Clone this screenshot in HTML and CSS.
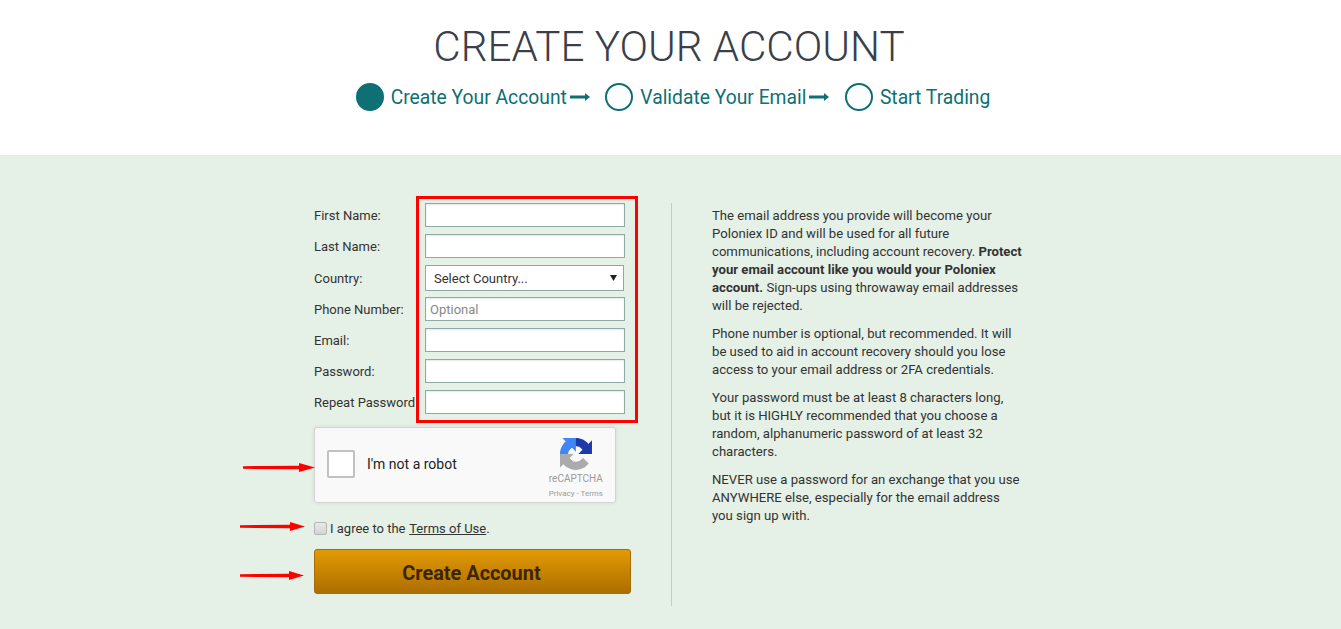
FILE: index.html
```html
<!DOCTYPE html>
<html>
<head>
	<title>Create Your Account</title>
	<link rel="stylesheet" href="styles.css">
</head>
<body>
	<header class="top">
		<h1>CREATE YOUR ACCOUNT</h1>
		<div class="steps">
			<span class="dot dot-on"></span>
			<span class="step-name">Create Your Account</span>
			<svg class="step-arrow" width="20" height="10" viewBox="0 0 20 10"><path d="M0 3.5h15V1l5 4-5 4V6.5H0z" fill="#0e6f74"/></svg>
			<span class="dot"></span>
			<span class="step-name">Validate Your Email</span>
			<svg class="step-arrow" width="20" height="10" viewBox="0 0 20 10"><path d="M0 3.5h15V1l5 4-5 4V6.5H0z" fill="#0e6f74"/></svg>
			<span class="dot"></span>
			<span class="step-name">Start Trading</span>
		</div>
	</header>

	<main class="panel">
		<form class="signup">
			<div class="rows">
				<label class="row"><span class="row-label">First Name:</span><input class="field" type="text"></label>
				<label class="row"><span class="row-label">Last Name:</span><input class="field" type="text"></label>
				<label class="row row-select"><span class="row-label">Country:</span>
					<span class="select-box">
						<select class="field-select"><option>Select Country...</option></select>
						<svg class="select-arrow" width="7" height="6" viewBox="0 0 7 6"><path d="M0 0h7L3.5 6z" fill="#222"/></svg>
					</span>
				</label>
				<label class="row"><span class="row-label">Phone Number:</span><input class="field" type="text" placeholder="Optional"></label>
				<label class="row"><span class="row-label">Email:</span><input class="field" type="text"></label>
				<label class="row"><span class="row-label">Password:</span><input class="field" type="password"></label>
				<label class="row"><span class="row-label">Repeat Password</span><input class="field" type="password"></label>
			</div>

			<div class="captcha">
				<span class="captcha-box"></span>
				<span class="captcha-text">I'm not a robot</span>
				<div class="captcha-brand">
					<svg width="32" height="32" viewBox="0 0 64 64">
						<path d="M64 31.955l-.033-1.37V4.687l-7.16 7.16C50.948 4.674 42.033.093 32.05.093c-10.4 0-19.622 4.96-25.458 12.64l11.736 11.86a15.55 15.55 0 0 1 4.754-5.334c2.05-1.6 4.952-2.906 8.968-2.906.485 0 .86.057 1.135.163 4.976.393 9.288 3.14 11.828 7.124l-8.307 8.307 26.3.001" fill="#1c3aa9"/>
						<path d="M31.862.001l-1.37.033H4.594l7.16 7.16C4.58 13.053 0 21.968 0 31.95c0 10.4 4.96 19.622 12.64 25.458l11.86-11.736a15.55 15.55 0 0 1-5.334-4.754c-1.6-2.05-2.906-4.952-2.906-8.968 0-.485.057-.86.163-1.135.393-4.976 3.14-9.288 7.124-11.828l8.307 8.307.001-26.3" fill="#4285f4"/>
						<path d="M.001 31.954l.033 1.37v25.9l7.16-7.16c5.86 7.173 14.775 11.754 24.757 11.754 10.4 0 19.622-4.96 25.458-12.64l-11.736-11.86a15.55 15.55 0 0 1-4.754 5.334c-2.05 1.6-4.952 2.906-8.968 2.906-.485 0-.86-.057-1.135-.163-4.976-.393-9.288-3.14-11.828-7.124l8.307-8.307-26.3-.001" fill="#ababab"/>
					</svg>
					<span class="captcha-name">reCAPTCHA</span>
					<span class="captcha-links">Privacy - Terms</span>
				</div>
			</div>

			<label class="agree"><span class="agree-box"></span>I agree to the&nbsp;<a href="#">Terms of Use</a>.</label>

			<button class="create" type="button">Create Account</button>
		</form>

		<aside class="notes">
			<p>The email address you provide will become your Poloniex ID and will be used for all future communications, including account recovery. <b>Protect your email account like you would your Poloniex account.</b> Sign-ups using throwaway email addresses will be rejected.</p>
			<p>Phone number is optional, but recommended. It will be used to aid in account recovery should you lose access to your email address or 2FA credentials.</p>
			<p>Your password must be at least 8 characters long, but it is HIGHLY recommended that you choose a random, alphanumeric password of at least 32 characters.</p>
			<p>NEVER use a password for an exchange that you use ANYWHERE else, especially for the email address you sign up with.</p>
		</aside>
	</main>

	<!-- red marks drawn over the screenshot -->
	<div class="mark-box"></div>
	<svg class="mark-arrow mark-a" width="72" height="9" viewBox="0 0 72 9"><path d="M0 3.2L56 2.8V0l16 4.5L56 9V6.2L0 5.8z" fill="#f00"/></svg>
	<svg class="mark-arrow mark-b" width="65" height="9" viewBox="0 0 65 9"><path d="M0 3.2L50 2.8V0l15 4.5L50 9V6.2L0 5.8z" fill="#f00"/></svg>
	<svg class="mark-arrow mark-c" width="64" height="9" viewBox="0 0 64 9"><path d="M0 3.2L49 2.8V0l15 4.5L49 9V6.2L0 5.8z" fill="#f00"/></svg>
</body>
</html>
```

FILE: styles.css
```css
* {
	box-sizing: border-box;
}

html, body {
	margin: 0;
	padding: 0;
	height: 100%;
}

body {
	position: relative;
	overflow: hidden;
	font-family: Roboto, "Liberation Sans", sans-serif;
	font-size: 13px;
	color: #333;
	background: #e5f0e6;
}

/* header */
.top {
	height: 155px;
	padding-top: 22px;
	background: #fff;
	text-align: center;
}

h1 {
	margin: 0;
	padding-right: 3px;
	font-size: 42.2px;
	line-height: 50px;
	font-weight: 300;
	color: #3a3f4a;
}

.steps {
	display: flex;
	justify-content: center;
	align-items: center;
	height: 28px;
	margin-top: 11px;
	padding-left: 5px;
	font-size: 19.3px;
	color: #0e6f74;
}

.dot {
	width: 28px;
	height: 28px;
	border: 2px solid #0e6f74;
	border-radius: 50%;
}

.dot-on {
	background: #0e6f74;
}

.step-name {
	margin-left: 7px;
}

.step-arrow {
	margin: 0 15.5px 0 3px;
}

/* form side */
.panel {
	display: flex;
	height: 474px;
	padding: 48px 0 0 314px;
}

.signup {
	width: 358px;
	height: 403px;
	padding-right: 40px;
	border-right: 1px solid #c3cdc5;
}

.rows {
	display: flex;
	flex-direction: column;
	gap: 7px;
}

.row {
	display: flex;
	align-items: center;
	height: 24px;
}

.row-select {
	height: 26px;
	margin-bottom: -1px;
}

.row-label {
	width: 111px;
	white-space: nowrap;
}

.field {
	width: 200px;
	height: 24px;
	padding: 0 4px;
	border: 1px solid #8fa9a6;
	background: #fff;
	box-shadow: inset 0 1px 2px #e3e8e8;
	font: 13px Roboto, sans-serif;
	border-radius: 0;
	outline: none;
}

.field::placeholder {
	color: #888;
}

.select-box {
	position: relative;
	width: 199px;
	height: 26px;
}

.field-select {
	width: 100%;
	height: 100%;
	padding: 0 8px;
	appearance: none;
	border: 1px solid #8fa9a6;
	border-radius: 0;
	background: #fff;
	font: 13px Roboto, sans-serif;
	color: #333;
}

.select-arrow {
	position: absolute;
	top: 10px;
	right: 7px;
}

/* recaptcha */
.captcha {
	position: relative;
	display: flex;
	align-items: center;
	width: 302px;
	height: 76px;
	margin-top: 13px;
	padding: 0 0 3px 12px;
	border: 1px solid #d3d3d3;
	border-radius: 3px;
	background: #f9f9f9;
	box-shadow: 0 0 4px rgba(0, 0, 0, 0.08);
}

.captcha-box {
	width: 28px;
	height: 28px;
	border: 2px solid #c1c1c1;
	border-radius: 2px;
	background: #fff;
}

.captcha-text {
	margin-left: 12px;
	font-size: 14px;
	color: #222;
}

.captcha-brand {
	position: absolute;
	top: 10px;
	right: 12px;
	display: flex;
	flex-direction: column;
	align-items: center;
	color: #9b9b9b;
}

.captcha-name {
	margin-top: 2px;
	font-size: 10px;
	line-height: 14px;
}

.captcha-links {
	margin-top: 2px;
	font-size: 8px;
	line-height: 12px;
}

/* agree + submit */
.agree {
	display: flex;
	align-items: center;
	height: 16px;
	margin-top: 17px;
}

.agree-box {
	width: 13px;
	height: 13px;
	margin-right: 3px;
	border: 1px solid #b5b5b5;
	border-radius: 2px;
	background: linear-gradient(#e8e8e8, #d5d5d5);
}

.agree a {
	margin-left: 0.5px;
	color: #333;
}

.create {
	display: block;
	width: 317px;
	height: 45px;
	margin-top: 13px;
	padding: 4px 2px 0 0;
	border: 1px solid #a56c08;
	border-radius: 3px;
	background: linear-gradient(#e29a04, #ad6e00);
	font: 700 19.9px Roboto, sans-serif;
	color: #3d2500;
}

/* right side text */
.notes {
	width: 311px;
	margin-left: 40px;
	padding-top: 4px;
	font-size: 13.15px;
	line-height: 18px;
}

.notes p {
	margin: 0 0 10px;
}

/* annotations */
.mark-box {
	position: absolute;
	left: 416px;
	top: 196px;
	width: 222px;
	height: 227px;
	border: 3px solid #f00;
}

.mark-arrow {
	position: absolute;
}

.mark-a {
	left: 243px;
	top: 463px;
}

.mark-b {
	left: 240px;
	top: 522px;
}

.mark-c {
	left: 240px;
	top: 571px;
}
```
